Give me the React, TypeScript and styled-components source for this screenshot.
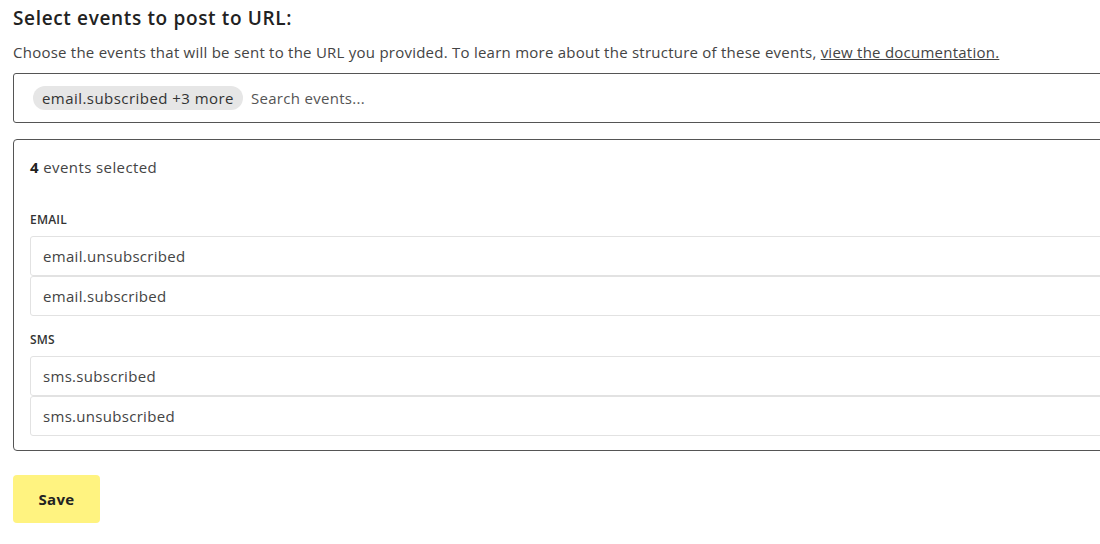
import styled, { createGlobalStyle } from "styled-components";

const GlobalStyle = createGlobalStyle`
    html, body {
        margin: 0;
        padding: 0;
        background: #ffffff;
        overflow: hidden;
    }
    body {
        font-family: "Open Sans", "Noto Sans", sans-serif;
        color: #4a4a4a;
    }
`;

const Page = styled.div`
    width: 1120px;
    padding: 6px 0 0 13px;
    box-sizing: border-box;
    letter-spacing: 0.3px;
`;

const Heading = styled.h2`
    margin: 0;
    font-size: 19px;
    line-height: 24px;
    font-weight: 600;
    color: #222222;
    letter-spacing: 0.65px;
`;

const Description = styled.p`
    margin: 12px 0 0;
    font-size: 15px;
    line-height: 20px;
    letter-spacing: 0.24px;
    color: #444444;

    a {
        color: #444444;
        text-decoration: underline;
    }
`;

const SearchBox = styled.div`
    margin-top: 11px;
    height: 50px;
    border: 1px solid #555555;
    border-radius: 3px;
    display: flex;
    align-items: center;
    gap: 8px;
    padding: 0 19px;
    box-sizing: border-box;
`;

const Chip = styled.span`
    height: 24px;
    display: inline-flex;
    align-items: center;
    padding: 0 9px;
    border-radius: 12px;
    background: #e6e6e6;
    font-size: 15px;
    letter-spacing: 0.45px;
    color: #333333;
`;

const SearchInput = styled.input`
    border: none;
    outline: none;
    flex: 1;
    font-family: inherit;
    font-size: 15px;
    letter-spacing: 0.3px;
    color: #333333;
    padding: 0;

    &::placeholder {
        color: #555555;
    }
`;

const Panel = styled.section`
    margin-top: 16px;
    border: 1px solid #555555;
    border-radius: 4px;
    padding: 18px 0 14px 16px;
`;

const Count = styled.div`
    margin-top: -1px;
    font-size: 15px;
    line-height: 20px;
    letter-spacing: 0.4px;
    color: #444444;

    b {
        color: #222222;
        font-weight: 700;
    }
`;

const Group = styled.div<{ $first?: boolean }>`
    margin-top: ${(p) => (p.$first ? "35px" : "16px")};
`;

const GroupLabel = styled.div`
    font-size: 12px;
    font-weight: 600;
    line-height: 16px;
    letter-spacing: 0.2px;
    color: #333333;
    margin-bottom: 8px;
`;

const Row = styled.div`
    height: 40px;
    border: 1px solid #e2e2e2;
    border-radius: 3px;
    box-sizing: border-box;
    display: flex;
    align-items: center;
    padding: 0 12px;
    font-size: 15px;
    color: #444444;
`;

const SaveButton = styled.button`
    margin-top: 24px;
    width: 87px;
    height: 48px;
    border: none;
    border-radius: 4px;
    background: #fff380;
    font-family: inherit;
    font-size: 15px;
    font-weight: 700;
    letter-spacing: 0.3px;
    color: #222222;
    cursor: pointer;
`;

const groups = [
    { name: "EMAIL", events: ["email.unsubscribed", "email.subscribed"] },
    { name: "SMS", events: ["sms.subscribed", "sms.unsubscribed"] },
];

const App = () => (
    <>
        <GlobalStyle />
        <Page>
            <Heading>Select events to post to URL:</Heading>
            <Description>
                Choose the events that will be sent to the URL you provided. To learn more about the
                structure of these events, <a href="#docs">view the documentation.</a>
            </Description>
            <SearchBox>
                <Chip>email.subscribed +3 more</Chip>
                <SearchInput placeholder="Search events..." />
            </SearchBox>
            <Panel>
                <Count>
                    <b>4</b> events selected
                </Count>
                {groups.map((g, i) => (
                    <Group key={g.name} $first={i === 0}>
                        <GroupLabel>{g.name}</GroupLabel>
                        {g.events.map((e) => (
                            <Row key={e}>{e}</Row>
                        ))}
                    </Group>
                ))}
            </Panel>
            <SaveButton>Save</SaveButton>
        </Page>
    </>
);

export default App;
